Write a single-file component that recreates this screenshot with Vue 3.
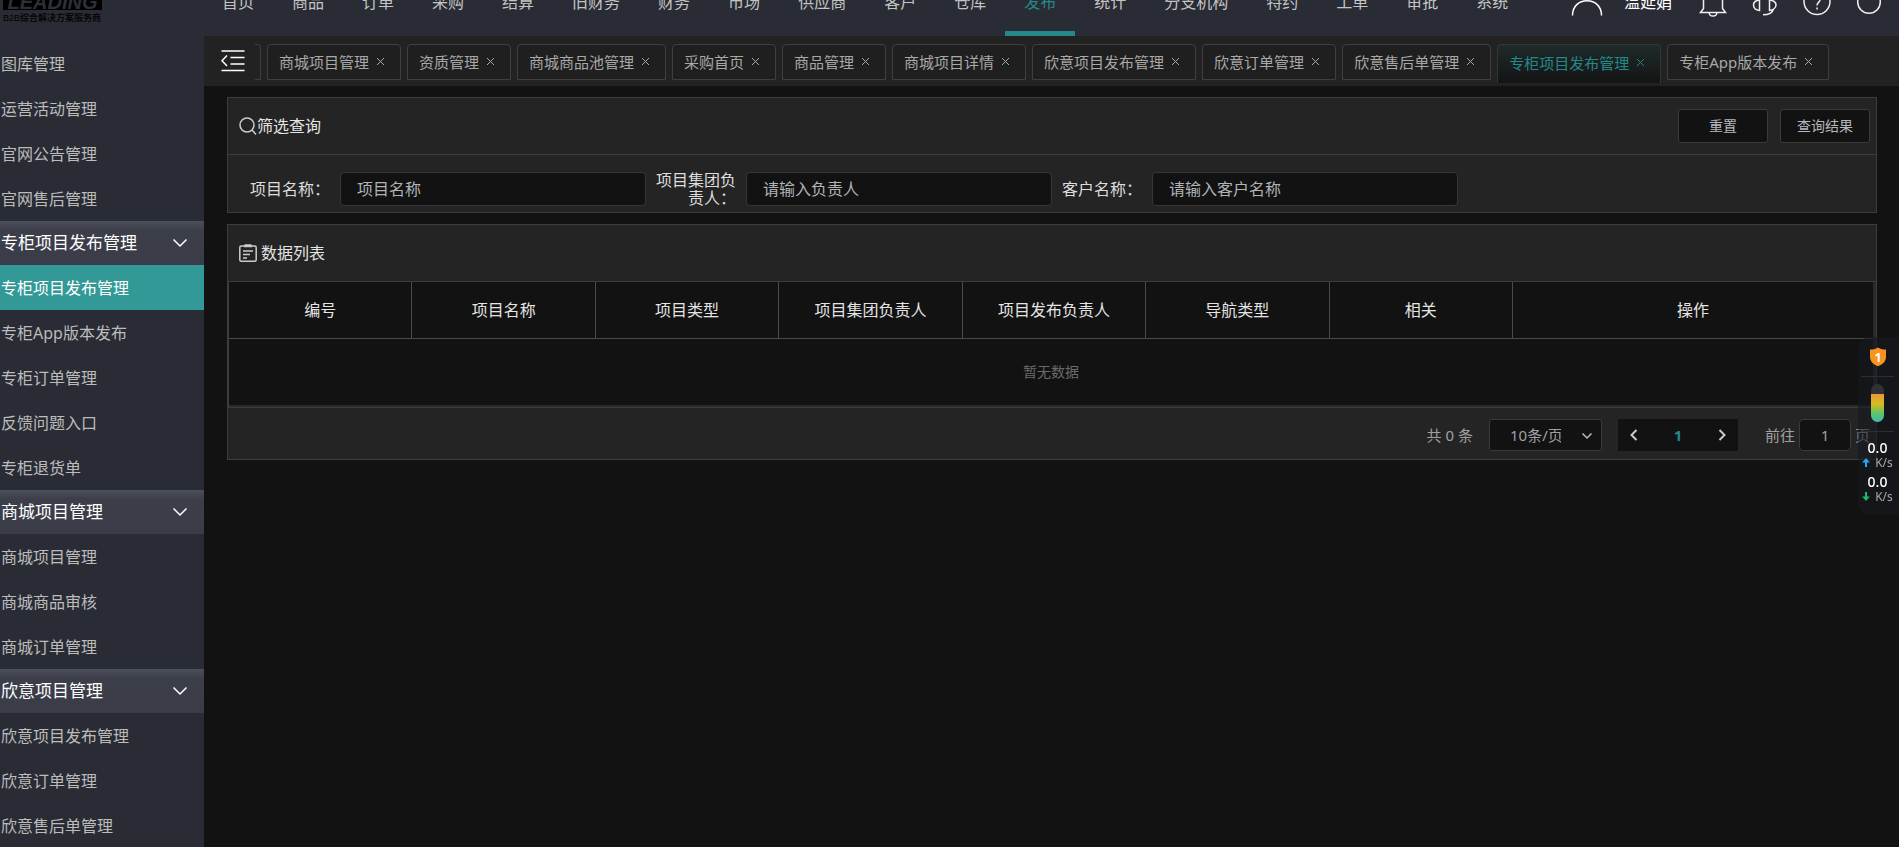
<script setup>
import { ref } from 'vue'

const navItems = ['首页', '商品', '订单', '采购', '结算', '旧财务', '财务', '市场', '供应商', '客户', '仓库', '发布', '统计', '分支机构', '特约', '工单', '审批', '系统']
const activeNav = ref('发布')

const groups = [
  { title: '', items: ['图库管理', '运营活动管理', '官网公告管理', '官网售后管理'] },
  { title: '专柜项目发布管理', items: ['专柜项目发布管理', '专柜App版本发布', '专柜订单管理', '反馈问题入口', '专柜退货单'] },
  { title: '商城项目管理', items: ['商城项目管理', '商城商品审核', '商城订单管理'] },
  { title: '欣意项目管理', items: ['欣意项目发布管理', '欣意订单管理', '欣意售后单管理'] },
]
const activeMenu = ref('专柜项目发布管理')

const tabs = ['商城项目管理', '资质管理', '商城商品池管理', '采购首页', '商品管理', '商城项目详情', '欣意项目发布管理', '欣意订单管理', '欣意售后单管理', '专柜项目发布管理', '专柜App版本发布']
const activeTab = ref('专柜项目发布管理')

const filters = ref([
  { id: 'f-name', label: '项目名称：', placeholder: '项目名称', value: '' },
  { id: 'f-owner', label: '项目集团负责人：', placeholder: '请输入负责人', value: '' },
  { id: 'f-client', label: '客户名称：', placeholder: '请输入客户名称', value: '' },
])
const reset = () => filters.value.forEach((f) => (f.value = ''))

const columns = ['编号', '项目名称', '项目类型', '项目集团负责人', '项目发布负责人', '导航类型', '相关', '操作']
const pageSize = ref('10')
const page = ref('1')
</script>

<template>
  <div class="shell">
    <header class="topbar">
      <div class="logo">
        <div class="logo-mark"><span>LEADING</span></div>
        <div class="logo-sub">B2B综合解决方案服务商</div>
      </div>
      <nav class="nav">
        <a v-for="n in navItems" :key="n" href="#" :class="{ active: n === activeNav }" @click.prevent="activeNav = n">{{ n }}</a>
      </nav>
      <div class="tools">
        <div class="user">
          <svg width="32" height="18" viewBox="0 0 32 18"><path d="M1.500 15.500C1.500 6 8 .8 16 .8S30.500 6 30.500 15.500" /></svg>
          <span>温延娟</span>
        </div>
        <button aria-label="消息"><svg width="28" height="18" viewBox="0 0 28 18"><path d="M4.500 0V8.500L1.500 12.500H26.500L23.500 8.500V0M10 12.500C10.500 17.200 17.500 17.200 18 12.500" /></svg></button>
        <button aria-label="客服"><svg width="28" height="18" viewBox="0 0 28 18"><path d="M8.500 0V10.500C4.500 10 2.500 7.500 2.500 5S4.500 .5 8.500 0M18.500 0V10.500C22.500 10 25 7.500 25 5S22.500 .5 18.500 0M22.500 9C21.500 13 19 14.800 12 14.800" /></svg></button>
        <button aria-label="帮助"><svg width="28" height="18" viewBox="0 0 28 18"><circle cx="14" cy="1.500" r="13" /><path d="M11 0C12 -3 17 -3 17 0C17 2 14 2.500 14 5.500M14 7.500V9.500" /></svg></button>
        <button aria-label="退出"><svg width="28" height="18" viewBox="0 0 28 18"><circle cx="14" cy="2" r="11.300" /></svg></button>
      </div>
    </header>

    <div class="body">
      <aside class="sidebar">
        <section v-for="g in groups" :key="g.title">
          <button v-if="g.title" class="group">
            <span>{{ g.title }}</span>
            <svg width="16" height="10" viewBox="0 0 16 10"><path d="M1.500 1.500L8 8L14.500 1.500" /></svg>
          </button>
          <a v-for="i in g.items" :key="i" href="#" class="entry" :class="{ active: i === activeMenu }" @click.prevent="activeMenu = i">{{ i }}</a>
        </section>
      </aside>

      <div class="content">
        <div class="tabbar">
          <button class="fold" aria-label="收起菜单">
            <svg width="24" height="22" viewBox="0 0 24 22"><path d="M.5 1H23.500M9.500 7.500H23.500M9.500 14H23.500M.5 20.500H23.500M6 5.500L1 10.800L6 16" /></svg>
          </button>
          <div class="tab-edge"></div>
          <div class="tabs">
            <div v-for="t in tabs" :key="t" class="tab" :class="{ active: t === activeTab }">
              <a href="#" @click.prevent="activeTab = t">{{ t }}</a>
              <button :aria-label="'关闭' + t"><svg width="9" height="9" viewBox="0 0 9 9"><path d="M1 1L8 8M8 1L1 8" /></svg></button>
            </div>
          </div>
        </div>

        <main>
          <form class="card" @submit.prevent>
            <div class="card-head">
              <svg class="i-search" width="18" height="18" viewBox="0 0 18 18"><circle cx="8" cy="8" r="7" /><path d="M12.800 12.800L17 17.500" /></svg>
              <h2>筛选查询</h2>
              <div class="actions">
                <button type="button" @click="reset">重置</button>
                <button type="submit">查询结果</button>
              </div>
            </div>
            <div class="fields">
              <div v-for="f in filters" :key="f.id" class="field">
                <label :for="f.id">{{ f.label }}</label>
                <input :id="f.id" v-model="f.value" type="text" :placeholder="f.placeholder" />
              </div>
            </div>
          </form>

          <section class="card">
            <div class="card-head">
              <svg class="i-list" width="18" height="18" viewBox="0 0 18 18"><rect x=".8" y="2" width="16.400" height="15.200" rx="1.500" /><path d="M5.500 1H12.500M5 2.500H13M4 7H14M4 10.500H11M4 14H8" /></svg>
              <h2 class="spaced">数据列表</h2>
            </div>
            <div class="table-wrap">
              <table>
                <thead>
                  <tr><th v-for="c in columns" :key="c" scope="col" :class="{ wide: c === '操作' }">{{ c }}</th></tr>
                </thead>
                <tbody>
                  <tr><td :colspan="columns.length">暂无数据</td></tr>
                </tbody>
              </table>
            </div>
            <div class="pagination">
              <span class="total">共 0 条</span>
              <div class="size">
                <select v-model="pageSize" aria-label="每页条数">
                  <option value="10">10条/页</option>
                  <option value="20">20条/页</option>
                </select>
                <svg width="12" height="8" viewBox="0 0 12 8"><path d="M1.500 1.500L6 6L10.500 1.500" /></svg>
              </div>
              <div class="pager">
                <button aria-label="上一页"><svg width="8" height="12" viewBox="0 0 8 12"><path d="M6.500 1L1.500 6L6.500 11" /></svg></button>
                <button class="current">1</button>
                <button aria-label="下一页"><svg width="8" height="12" viewBox="0 0 8 12"><path d="M1.500 1L6.500 6L1.500 11" /></svg></button>
              </div>
              <label class="jump">前往<input v-model="page" type="text" />页</label>
            </div>
          </section>
        </main>
      </div>
    </div>

    <div class="monitor">
      <svg class="shield" width="18" height="20" viewBox="0 0 18 20">
        <path d="M9 .5C11.500 2.300 14 2.500 17 2.500V10C17 14.500 13.500 17.500 9 19.300C4.500 17.500 1 14.500 1 10V2.500C4 2.500 6.500 2.300 9 .5Z" />
        <text x="9" y="14.500" text-anchor="middle">1</text>
      </svg>
      <hr />
      <div class="gauge"><div></div></div>
      <hr />
      <div class="rate up">
        <b>0.0</b>
        <span><svg width="8" height="9" viewBox="0 0 8 9"><path d="M4 0L8 4.500H5V9H3V4.500H0Z" /></svg>K/s</span>
      </div>
      <div class="rate down">
        <b>0.0</b>
        <span><svg width="8" height="9" viewBox="0 0 8 9"><path d="M4 9L0 4.500H3V0H5V4.500H8Z" /></svg>K/s</span>
      </div>
    </div>
  </div>
</template>

<style>
body {
  background: #121212;
}
</style>

<style scoped>
* {
  box-sizing: border-box;
}
.shell {
  height: 100vh;
  overflow: hidden;
  display: flex;
  flex-direction: column;
  background: #121212;
  color: #ddd;
  font-family: "Noto Sans", "Noto Sans CJK SC", sans-serif;
  font-size: 16px;
  line-height: 18px;
}
a {
  color: inherit;
  text-decoration: none;
}
button,
input,
select {
  margin: 0;
  padding: 0;
  border: 0;
  background: none;
  color: inherit;
  font: inherit;
}
button {
  cursor: pointer;
}
svg {
  display: block;
  flex: none;
  fill: none;
  stroke: currentColor;
  stroke-width: 1.5;
}

/* top bar */
.topbar {
  flex: none;
  display: flex;
  height: 36px;
  background: #292c34;
}
.logo {
  flex: none;
  width: 203px;
  padding-left: 3px;
  color: #000;
}
.logo-mark {
  display: flex;
  align-items: flex-end;
  justify-content: center;
  width: 99px;
  height: 10px;
  overflow: hidden;
  background: #000;
  color: #2d3038;
  font-family: "Liberation Sans", sans-serif;
  font-size: 20px;
  font-weight: 700;
  font-style: italic;
  line-height: 16px;
}
.logo-sub {
  margin-top: 2px;
  font-family: "Liberation Sans", "Noto Sans CJK SC", sans-serif;
  font-size: 9px;
  font-weight: 500;
  line-height: 12px;
}
.nav {
  display: flex;
}
.nav a {
  height: 36px;
  padding: 0 19px;
  border-bottom: 5px solid transparent;
  line-height: 4px;
  color: #c4c4c4;
  white-space: nowrap;
}
.nav a.active {
  color: #25898a;
  border-color: #25898a;
}
.tools {
  display: flex;
  gap: 24px;
  align-items: flex-start;
  margin-left: auto;
  padding-right: 16px;
  color: #eee;
}
.user {
  display: flex;
  gap: 21px;
  margin-right: 3px;
  line-height: 4px;
  color: #fff;
}

/* side menu */
.body {
  flex: 1;
  min-height: 0;
  display: flex;
}
.sidebar {
  flex: none;
  width: 204px;
  padding-top: 5px;
  overflow: hidden;
  background: #292c34;
}
.entry {
  display: block;
  height: 45px;
  padding-left: 1px;
  line-height: 47px;
  color: #bcbcbc;
}
.entry.active {
  background: #339997;
  color: #fff;
}
.group {
  display: flex;
  align-items: center;
  justify-content: space-between;
  width: 100%;
  height: 44px;
  padding: 0 16px 0 1px;
  background: linear-gradient(#4c505b 0, #3c3f4a 9px, #3a3d48 100%);
  color: #fff;
  font-size: 17px;
}

/* opened pages */
.content {
  flex: 1;
  min-width: 0;
}
.tabbar {
  display: flex;
  height: 50px;
  padding: 8px 0 0 17px;
  background: #222;
}
.fold {
  height: 22px;
  margin-top: 6px;
  color: #fff;
}
.tab-edge {
  width: 6px;
  height: 36px;
  margin: 0 6px 0 10px;
  border: 1px solid #3f3f3f;
  border-left: 0;
  border-radius: 0 4px 0 0;
}
.tabs {
  display: flex;
  gap: 6px;
}
.tab {
  display: flex;
  gap: 7px;
  height: 36px;
  padding: 0 15px 0 11px;
  border: 1px solid #3f3f3f;
  border-radius: 4px 4px 0 0;
  background: #1f1f1f;
  color: #a8a8a8;
  font-size: 15px;
  line-height: 34px;
  white-space: nowrap;
}
.tab button {
  height: 32px;
}
.tab svg {
  stroke-width: 1;
}
.tab.active {
  height: 39px;
  border-color: #2c3a39;
  border-bottom: 0;
  background: linear-gradient(#1f2a2a, #141414);
  color: #25898a;
  line-height: 36px;
}
.tab.active button {
  height: 34px;
}

/* cards */
main {
  display: flex;
  flex-direction: column;
  gap: 11px;
  padding: 11px 22px 0 23px;
}
.card {
  border: 1px solid #3d3d3d;
  background: #242424;
}
.card-head {
  display: flex;
  align-items: center;
  height: 57px;
  padding: 0 6px 0 11px;
  border-bottom: 1px solid #3d3d3d;
}
h2 {
  margin: 0;
  font-size: 16px;
  font-weight: 400;
  line-height: 20px;
  color: #e4e4e4;
}
.spaced {
  margin-left: 4px;
}
.i-search,
.i-list {
  color: #ccc;
}
.actions {
  display: flex;
  gap: 12px;
  margin: 0 0 0 auto;
}
.actions button {
  width: 90px;
  height: 34px;
  border: 1px solid #3a3a3a;
  border-radius: 3px;
  background: #121212;
  color: #b4b7bc;
  font-size: 14px;
}
.fields {
  display: flex;
  gap: 8px;
  padding: 17px 0 6px 20px;
}
.field {
  display: flex;
  align-items: center;
  width: 398px;
  height: 34px;
}
.field label {
  flex: none;
  width: 92px;
  padding-right: 10px;
  text-align: right;
}
.field input {
  flex: 1;
  min-width: 0;
  height: 34px;
  padding: 0 16px;
  border: 1px solid #363636;
  border-radius: 4px;
  background: #121212;
}
.field input::placeholder {
  color: #b0b3b8;
  opacity: 1;
}

/* data table */
.table-wrap {
  padding-right: 3px;
  border-left: 1px solid #3d3d3d;
  border-bottom: 1px solid #3d3d3d;
  background: #2a2a2d;
}
table {
  width: 100%;
  table-layout: fixed;
  border-collapse: separate;
  border-spacing: 0;
  border-bottom: 2px solid #2a2a2d;
  background: #121212;
}
th {
  height: 57px;
  padding: 0;
  border-right: 1px solid #4a4a4a;
  border-bottom: 1px solid #4a4a4a;
  font-weight: 400;
  color: #e4e4e4;
}
th.wide {
  width: 360px;
  border-right: 0;
}
td {
  height: 66px;
  padding: 0;
  text-align: center;
  font-size: 14px;
  color: #6a6a6a;
}
.pagination {
  display: flex;
  align-items: center;
  justify-content: flex-end;
  height: 51px;
  padding: 2px 6px 0 0;
  font-size: 15px;
  color: #a0a0a0;
}
.total {
  margin-right: 16px;
}
.size {
  position: relative;
  width: 113px;
  margin-right: 16px;
}
.size select {
  display: block;
  width: 100%;
  height: 32px;
  padding: 0 40px 0 20px;
  border: 1px solid #3a3a3a;
  border-radius: 3px;
  background: #121212;
  appearance: none;
}
.size svg {
  position: absolute;
  right: 9px;
  top: 13px;
  color: #bbb;
}
.pager {
  display: flex;
  width: 120px;
  height: 32px;
  margin-right: 27px;
  background: #121212;
}
.pager button {
  display: flex;
  flex: 1 1 32px;
  align-items: center;
  justify-content: center;
  color: #ccc;
}
.pager svg {
  stroke-width: 2;
}
.pager .current {
  flex-basis: 56px;
  color: #25898a;
  font-weight: 700;
}
.jump {
  display: flex;
  gap: 4px;
  align-items: center;
}
.jump input {
  width: 52px;
  height: 32px;
  border: 1px solid #3a3a3a;
  border-radius: 4px;
  background: #121212;
  text-align: center;
}

/* network monitor floating over the page */
.monitor {
  position: fixed;
  top: 337px;
  right: 0;
  display: flex;
  flex-direction: column;
  align-items: center;
  width: 41px;
  height: 178px;
  padding: 10px 2px 0 0;
  border-radius: 12px 0 0 12px;
  background: rgba(22, 25, 31, 0.6);
}
.shield {
  stroke: none;
  fill: #f7931e;
}
.shield text {
  fill: #fff;
  font-size: 13px;
  font-weight: 700;
}
.monitor hr {
  width: 33px;
  margin: 9px 0 7px;
  border: 0;
  border-top: 1px solid #2c2e35;
}
.monitor .gauge + hr {
  margin-bottom: 6px;
}
.gauge {
  display: flex;
  align-items: flex-end;
  flex: none;
  width: 13px;
  height: 38px;
  overflow: hidden;
  border-radius: 7px;
  background: #303136;
}
.gauge div {
  width: 100%;
  height: 28px;
  background: linear-gradient(#e8973a, #d9bb1c 35%, #5cc46a 70%, #3fb8a8);
}
.rate {
  display: flex;
  flex-direction: column;
  align-items: center;
  height: 34px;
}
.rate b {
  color: #fff;
  font-size: 14px;
  font-weight: 500;
  line-height: 20px;
}
.rate span {
  display: flex;
  gap: 5px;
  align-items: center;
  color: #a9abb0;
  font-size: 12px;
  line-height: 8px;
}
.rate svg {
  stroke: none;
  fill: #2aa3f5;
}
.rate.down svg {
  fill: #1fb866;
}
</style>
